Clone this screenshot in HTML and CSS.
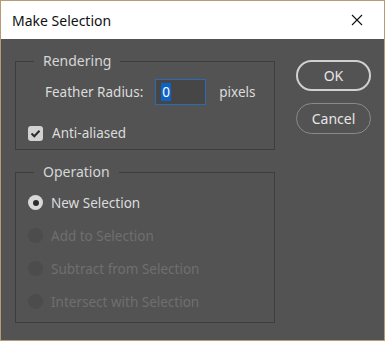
FILE: index.html
```html
<!DOCTYPE html>
<html lang="en">
<head>
    <meta charset="UTF-8">
    <title>Make Selection</title>
    <link rel="stylesheet" href="styles.css">
</head>
<body>
    <div class="window">
        <div class="titlebar">
            <span class="title">Make Selection</span>
            <svg class="close" width="12" height="12" viewBox="0 0 12 12">
                <path d="M1 1 L11 11 M11 1 L1 11" stroke="#111" stroke-width="1.1" fill="none"/>
            </svg>
        </div>

        <div class="content">
            <div class="groups">
                <!-- Rendering -->
                <fieldset class="group rendering">
                    <legend>Rendering</legend>
                    <div class="feather-row">
                        <label>Feather Radius:</label>
                        <div class="input"><span class="sel">0</span></div>
                        <span>pixels</span>
                    </div>
                    <div class="check-row">
                        <span class="checkbox">
                            <svg width="11" height="11" viewBox="0 0 11 11">
                                <path d="M1.5 5.5 L4.3 8.3 L9.5 2.8" stroke="#2b2b2b" stroke-width="2" fill="none"/>
                            </svg>
                        </span>
                        <span>Anti-aliased</span>
                    </div>
                </fieldset>

                <!-- Operation -->
                <fieldset class="group operation">
                    <legend>Operation</legend>
                    <div class="radio-row">
                        <span class="radio checked"></span>
                        <span>New Selection</span>
                    </div>
                    <div class="radio-row disabled">
                        <span class="radio"></span>
                        <span>Add to Selection</span>
                    </div>
                    <div class="radio-row disabled">
                        <span class="radio"></span>
                        <span>Subtract from Selection</span>
                    </div>
                    <div class="radio-row disabled">
                        <span class="radio"></span>
                        <span>Intersect with Selection</span>
                    </div>
                </fieldset>
            </div>

            <div class="buttons">
                <button class="btn primary">OK</button>
                <button class="btn">Cancel</button>
            </div>
        </div>
    </div>
</body>
</html>
```

FILE: styles.css
```css
body {
    margin: 0;
    font-family: "Noto Sans", "Open Sans", sans-serif;
    background: #535353;
}

.window {
    width: 385px;
    height: 341px;
    box-sizing: border-box;
    border: 1px solid #b59c76;
    background: #535353;
    display: flex;
    flex-direction: column;
}

.titlebar {
    height: 38px;
    background: #fff;
    display: flex;
    align-items: center;
    justify-content: space-between;
    padding: 0 21px 0 11px;
    flex-shrink: 0;
}

.title {
    font-size: 14px;
    color: #111;
}

.content {
    display: flex;
    padding: 13px 0 0 14px;
}

.groups {
    width: 260px;
}

.group {
    margin: 0;
    border: 1px solid #3d3d3d;
    padding: 0;
    color: #dcdcdc;
    font-size: 13.5px;
}

.group legend {
    margin-left: 6px;
    padding: 0 9px;
    color: #d6d6d6;
    line-height: 18px;
    font-size: 14px;
}

.rendering {
    padding: 9px 0 6px 12px;
}

.feather-row {
    display: flex;
    align-items: center;
    margin-left: 17px;
    height: 26px;
}

.input {
    width: 44px;
    height: 24px;
    margin: 0 13px 0 12px;
    border: 1px solid #2d6ab3;
    background: #464646;
    display: flex;
    align-items: center;
    padding-left: 5px;
    box-sizing: content-box;
}

.sel {
    background: #0b63c9;
    color: #fff;
    line-height: 18px;
    padding: 0 1px;
}

.check-row {
    display: flex;
    align-items: center;
    gap: 9px;
    height: 20px;
    margin-top: 18px;
}

.checkbox {
    width: 15px;
    height: 15px;
    border-radius: 3px;
    background: #d2d2d2;
    display: flex;
    align-items: center;
    justify-content: center;
}

.operation {
    margin-top: 13px;
    padding: 5px 0 4px 12px;
}

.radio-row {
    display: flex;
    align-items: center;
    gap: 8px;
    height: 33px;
}

.radio {
    width: 15px;
    height: 15px;
    border-radius: 50%;
    background: #4c4c4c;
    box-sizing: border-box;
}

.radio.checked {
    background: #d8d8d8;
    display: flex;
    align-items: center;
    justify-content: center;
}

.radio.checked::after {
    content: "";
    width: 6px;
    height: 6px;
    border-radius: 50%;
    background: #2b2b2b;
}

.disabled {
    color: #6f6f6f;
}

.buttons {
    display: flex;
    flex-direction: column;
    gap: 12px;
    margin-left: 21px;
    margin-top: 8px;
}

.btn {
    width: 75px;
    height: 31px;
    border-radius: 16px;
    border: 1px solid #8a8a8a;
    background: transparent;
    color: #e6e6e6;
    font-family: "Noto Sans", "Open Sans", sans-serif;
    font-size: 14px;
    padding: 0;
}

.btn.primary {
    border: 2px solid #d0d0d0;
}
```
